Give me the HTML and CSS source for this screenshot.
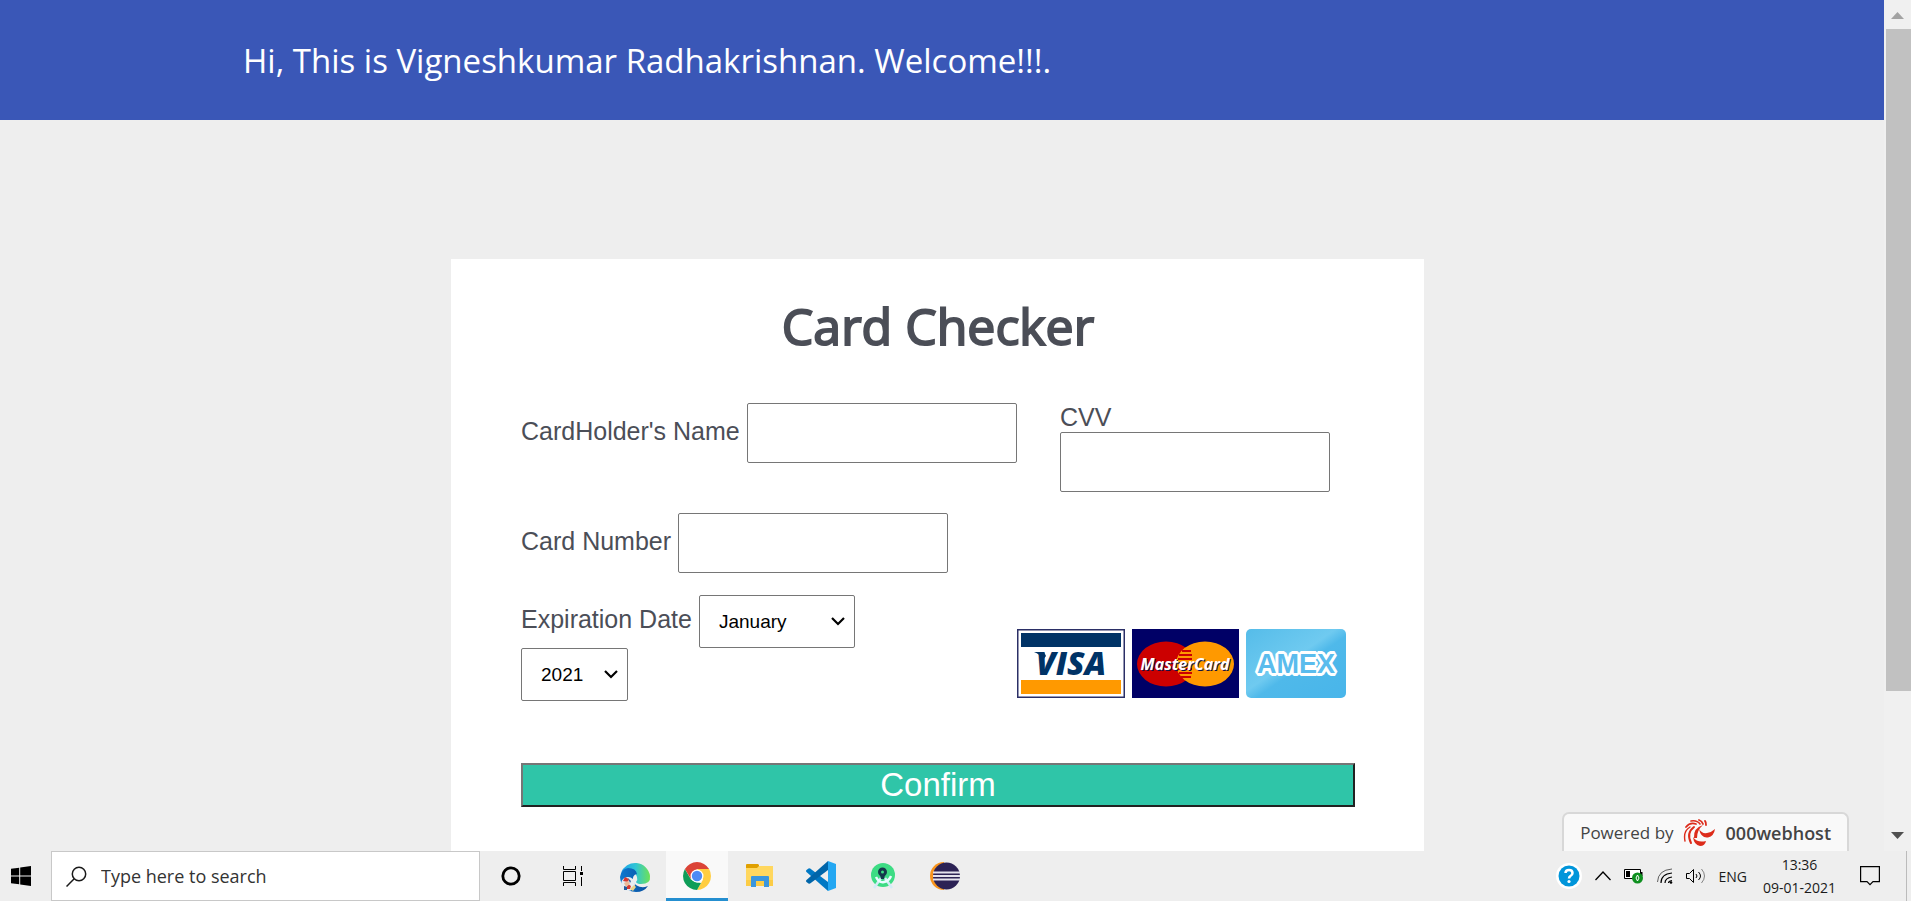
FILE: index.html
```html
<!DOCTYPE html>
<html lang="en">
<head>
<meta charset="utf-8">
<title>Card Checker</title>
<link rel="stylesheet" href="styles.css">
</head>
<body>
<div class="viewport">
  <div class="page">
    <header class="banner"><p class="banner-text">Hi, This is Vigneshkumar Radhakrishnan. Welcome!!!.</p></header>
    <main class="content">
      <form class="card">
        <h1 class="card-title">Card Checker</h1>
        <div class="row">
          <div class="field">
            <label for="owner">CardHolder's Name</label>
            <input id="owner" class="text-input" type="text">
          </div>
          <div class="field-stacked">
            <label for="cvv">CVV</label>
            <input id="cvv" class="text-input" type="text">
          </div>
        </div>
        <div class="field number-field">
          <label for="number">Card Number</label>
          <input id="number" class="text-input" type="text">
        </div>
        <div class="row">
          <div class="expiry">
            <div class="field">
              <label for="month">Expiration Date</label>
              <select id="month" class="select month"><option>January</option><option>February</option><option>March</option></select>
            </div>
            <select class="select year" aria-label="Expiration year"><option>2021</option><option>2022</option><option>2023</option></select>
          </div>
          <div class="brands">
            <svg width="108" height="69" viewBox="0 0 108 69" role="img" aria-label="Visa">
              <rect x=".75" y=".75" width="106.500" height="67.500" fill="#fff" stroke="#2b2f66" stroke-width="1.500"/>
              <rect x="4" y="4" width="100" height="14" fill="#003366"/><rect x="4" y="51" width="100" height="14" fill="#ff9900"/>
              <text x="54" y="46" text-anchor="middle" class="visa">VISA</text>
              <path d="M17 23h10l2 4-3 4q-3-6-9-8z" fill="#003366"/>
            </svg>
            <svg width="107" height="69" viewBox="0 0 107 69" role="img" aria-label="MasterCard">
              <rect width="107" height="69" fill="#000066"/>
              <ellipse cx="34" cy="35" rx="29" ry="22.500" fill="#cc0000"/><ellipse cx="73" cy="35" rx="29" ry="22.500" fill="#ff9900"/>
              <path d="M50 22h9M47 26h13M46 30h14M46 40h14M47 44h13M49 48h10" stroke="#cc0000" stroke-width="1.800"/>
              <text x="54" y="42" text-anchor="middle" class="mastercard shade">MasterCard</text>
              <text x="53" y="41" text-anchor="middle" class="mastercard">MasterCard</text>
            </svg>
            <svg width="100" height="69" viewBox="0 0 100 69" role="img" aria-label="Amex">
              <defs><linearGradient id="amex" x1="0" y1="0" x2="1" y2="1"><stop offset="0" stop-color="#55bce9"/><stop offset=".45" stop-color="#6fcaf0"/><stop offset=".55" stop-color="#4fb9ea"/><stop offset="1" stop-color="#48b5ea"/></linearGradient></defs>
              <rect width="100" height="69" rx="5" fill="url(#amex)"/>
              <text x="50" y="44" text-anchor="middle" class="amex">AMEX</text>
            </svg>
          </div>
        </div>
        <button class="confirm" type="submit">Confirm</button>
      </form>
    </main>
    <a class="host-badge" href="#">
      <span>Powered by</span>
      <svg width="34" height="28" viewBox="0 0 34 28" fill="#dd2c1b" aria-hidden="true">
        <path d="M16 10q3 5 8 4 5-1 8-4-1 7-7 8.500-7 1-9-8.500z"/>
        <path d="M10 18q4 6 13 4-1 5-6 5-6-1-7-9z"/>
        <path d="M11 19q-1-10 9-13-6 5-6 13z"/>
        <g fill="none" stroke="#dd2c1b" stroke-linecap="round"><path d="M8 24Q3 14 11 8" stroke-width="2"/><path d="M2 22Q0 12 7 8" stroke-width="1.400"/><path d="M3 8q4-5 10-3" stroke-width="1.800"/><path d="M8 2q6-1 9 3" stroke-width="1.600"/><path d="M16 1q3 1 4 4M22 2q1 1 1 4" stroke-width="1.800"/></g>
      </svg>
      <span class="host-name">000webhost</span>
    </a>
  </div>
  <div class="scrollbar" aria-hidden="true">
    <svg class="arrow" viewBox="0 0 13 7" fill="#a3a3a3"><path d="M0 7L6.500 0 13 7z"/></svg>
    <div class="thumb"></div>
    <svg class="arrow" viewBox="0 0 13 7" fill="#505050"><path d="M0 0h13L6.500 7z"/></svg>
  </div>
</div>
<footer class="taskbar">
  <button class="start" aria-label="Start"><svg width="20" height="20" viewBox="0 0 20 20"><path d="M0 2.800L8.200 1.700V9.400H0zM9.200 1.500L20 0v9.400H9.200zM0 10.400h8.200v7.900L0 17.200zM9.200 10.400H20V20L9.200 18.500z"/></svg></button>
  <label class="search">
    <svg width="21" height="21" viewBox="0 0 21 21" fill="none" stroke="#1a1a1a" stroke-width="1.500" aria-hidden="true"><circle cx="13" cy="8" r="6.700"/><path d="M8.200 12.800L.5 20.500"/></svg>
    <input type="text" placeholder="Type here to search" aria-label="Type here to search">
  </label>
  <nav class="apps">
    <button class="app" aria-label="Cortana"><svg width="20" height="20" viewBox="0 0 20 20"><circle cx="10" cy="10" r="8.200" fill="none" stroke="#000" stroke-width="2.800"/></svg></button>
    <button class="app" aria-label="Task View"><svg width="20" height="20" viewBox="0 0 20 20" fill="none" stroke="#000"><path d="M.5 0v3.500h12V0M.5 5.500h12v9H.5zM.5 20v-3.500h12V20M18.500 0v5M18.500 11v9"/><path d="M17 6h3v3h-3z" fill="#000" stroke="none"/></svg></button>
    <button class="app" aria-label="Edge"><svg width="31" height="31" viewBox="0 0 31 31">
      <defs>
        <linearGradient id="edge-top" x1="0" x2="1"><stop stop-color="#1ca0e8"/><stop offset=".5" stop-color="#30c5d5"/><stop offset="1" stop-color="#6ee255"/></linearGradient>
        <linearGradient id="edge-side" x1="0" x2="1"><stop stop-color="#0d78d0"/><stop offset="1" stop-color="#0a4f9e"/></linearGradient>
      </defs>
      <path d="M1 12A15 15 0 0130 15q1 8-9 8-4 0-5-2 2-2 1-5-3-8-9-8-5 1-7 4z" fill="url(#edge-top)"/>
      <path d="M0 16Q1 8 8 7q8 0 9 6-5 1-4 7 3 7 12 6l3-1q-4 6-12 6Q1 30 0 16z" fill="url(#edge-side)"/>
      <circle cx="8" cy="23" r="7" fill="#e7edf1"/><path d="M3 20l2-4 4 2-1 3zM8 23l3 2-1 3H6z" fill="#d53831"/><path d="M4 22l4-2 2 3-4 3z" fill="#ebbb99"/><path d="M4 25l3 1v3H4zM8 17l3 3-1 2z" fill="#275b99"/><path d="M10 28l4-4 2 2-3 4z" fill="#ead38a"/>
    </svg></button>
    <button class="app active" aria-label="Chrome"><svg width="28" height="28" viewBox="0 0 28 28">
      <path d="M14 7h12.100A14 14 0 0114 28l6.100-10.500z" fill="#ffcd40"/><path d="M1.900 7L8 17.500 14 20.500 18 21 14 28A14 14 0 011.900 7z" fill="#0f9d58"/><path d="M1.900 7A14 14 0 0126.100 7H14L8 17z" fill="#db4437"/>
      <circle cx="14" cy="14" r="6.500" fill="#fff"/><circle cx="14" cy="14" r="5.200" fill="#4c8bf5"/>
    </svg></button>
    <button class="app" aria-label="File Explorer"><svg width="27" height="24" viewBox="0 0 27 24"><path d="M0 1q0-1 1-1h11l1 1v4H0z" fill="#e0a000"/><path d="M0 4h11l2-2h14v20H0z" fill="#ffd75e"/><path d="M0 16h27v6H0z" fill="#fccc45"/><path d="M5 23V13q0-1 1-1h16q1 0 1 1v10h-5v-6h-8v6z" fill="#3a96dd"/></svg></button>
    <button class="app" aria-label="Visual Studio Code"><svg width="30" height="30" viewBox="0 0 30 30"><path d="M.5 11q-1-1 0-2l2-1.500q1-.5 2 .2L22 21v9z" fill="#0078c4"/><path d="M.5 19q-1 1 0 2l2 1.500q1 .5 2-.2L22 9V0z" fill="#0065a9"/><path d="M22 0l8 3v24l-8 3z" fill="#24a7f2"/></svg></button>
    <button class="app" aria-label="Android Studio"><svg width="26" height="28" viewBox="0 0 26 28"><circle cx="13" cy="13" r="12" fill="#3ddc84"/><path d="M11 16L4 26M15 16l7 10" stroke="#d3ecf7" stroke-width="2.500"/><path d="M6 15q3 6 8 5 5-1 7-6" fill="none" stroke="#e9fbff" stroke-width="2.500"/><circle cx="12.500" cy="10" r="3" fill="none" stroke="#14394b" stroke-width="3"/><path d="M10 13h5l-1 4h-3z" fill="#14394b"/></svg></button>
    <button class="app" aria-label="Eclipse"><svg width="30" height="28" viewBox="0 0 30 28"><path d="M14 0A14 14 0 0014 28V0z" fill="#f7941e"/><circle cx="16.500" cy="14" r="13.500" fill="#2c2255"/><path d="M3 10.500h27M3 14h27M3 17.500h27" stroke="#e4e2ee" stroke-width="2"/></svg></button>
  </nav>
  <div class="tray">
    <svg width="26" height="26" viewBox="0 0 26 26" aria-hidden="true"><circle cx="13" cy="13" r="13" fill="#fff"/><circle cx="13" cy="13" r="10.500" fill="#0095da"/><path d="M9.500 10q0-3 3.500-3t3.500 3q0 2-2 3-1.500 1-1.500 2.500" fill="none" stroke="#fff" stroke-width="2.500"/><circle cx="13" cy="18.500" r="1.600" fill="#fff"/></svg>
    <svg width="16" height="10" viewBox="0 0 16 10" fill="none" stroke="#000" stroke-width="1.300" aria-hidden="true"><path d="M.5 9L8 1l7.500 8"/></svg>
    <svg width="20" height="16" viewBox="0 0 20 16" aria-hidden="true"><path d="M.5 1.500h16v9H.5z" fill="#fff" stroke="#000"/><path d="M2 3h4v6H2z"/><path d="M17 4h1.500v4H17z"/><circle cx="13.500" cy="10" r="5.500" fill="#0f9020"/><path d="M13.500 7q3 3 0 6-3-3 0-6z" fill="none" stroke="#fff"/></svg>
    <svg width="16" height="16" viewBox="0 0 16 16" fill="none" stroke="#000" aria-hidden="true"><path d="M.5 14Q1 2 15 1" opacity=".6"/><path d="M4 15Q4 6 15 5M8 15q0-5 7-6M11.500 15q0-2 3.500-2.500" stroke-width="1.200"/><circle cx="14" cy="14.500" r="1.300" fill="#000" stroke="none"/></svg>
    <svg width="20" height="18" viewBox="0 0 20 18" fill="none" stroke="#000" aria-hidden="true"><path d="M.5 6.500h3l4-4v13l-4-4h-3z"/><path d="M10 7q2 2 0 4M12.500 5q4 4 0 8"/><path d="M15.500 2q6 7 0 14" opacity=".45"/></svg>
    <span class="lang">ENG</span>
    <time class="clock" datetime="2021-01-09T13:36"><span>13:36</span><span>09-01-2021</span></time>
    <svg width="20" height="20" viewBox="0 0 20 20" fill="none" stroke="#000" stroke-width="1.200" aria-hidden="true"><path d="M.6.600h18.800v15H13l-3 3-3-3H.6z"/></svg>
  </div>
</footer>
</body>
</html>
```
FILE: styles.css
```css
* { box-sizing: border-box; }
body {
  margin: 0;
  height: 100vh;
  display: flex;
  flex-direction: column;
  overflow: hidden;
  background: #eee;
  font-family: "Open Sans", "Noto Sans", sans-serif;
}
button { font: inherit; }
.viewport { flex: 1; min-height: 0; display: flex; }
.page { position: relative; flex: 1; min-width: 0; overflow: hidden; }

.banner { background: #3a57b7; color: #fff; padding: 37px 16px 35px 243px; }
.banner-text { margin: 0; font-size: 33px; line-height: 48px; }

.content { padding: 139px 9px 0 0; }
.card {
  max-width: 973px;
  margin: 0 auto;
  padding: 35px 69px 80px 70px;
  background: #fff;
  color: #4b4e57;
  font-family: "Liberation Sans", Arial, sans-serif;
  font-size: 25px;
  line-height: 29px;
}
.card-title {
  margin: 0 0 45px;
  font-family: "Open Sans", sans-serif;
  font-size: 50px;
  line-height: 64px;
  font-weight: 400;
  -webkit-text-stroke: 2px #4b4e57;
  text-align: center;
}
.row { display: flex; align-items: flex-start; justify-content: space-between; }
.field { display: flex; align-items: center; gap: 7px; }
.field label { padding-bottom: 4px; }
.field-stacked { display: flex; flex-direction: column; margin-right: 25px; }
.number-field { margin: 21px 0 22px; }
.text-input {
  width: 270px;
  height: 60px;
  padding: 0 18px;
  border: 1px solid #767676;
  border-radius: 2px;
  background: #fff;
  font: 19px "Liberation Sans", Arial, sans-serif;
}
.select {
  appearance: none;
  height: 53px;
  padding: 0 19px;
  border: 1px solid #767676;
  border-radius: 2px;
  color: #000;
  background: #fff url("data:image/svg+xml,%3Csvg xmlns='http://www.w3.org/2000/svg' width='14' height='9' fill='none' stroke='black' stroke-width='2.200'%3E%3Cpath d='M1 1l6 6 6-6'/%3E%3C/svg%3E") no-repeat right 9px center;
  font: 19px "Liberation Sans", Arial, sans-serif;
}
.month { width: 156px; }
.year { width: 107px; }
.expiry { display: flex; flex-direction: column; align-items: flex-start; }
.brands { display: flex; gap: 7px; margin: 34px 9px 0 0; }
.visa { font: italic 800 32px "Open Sans", sans-serif; fill: #003366; }
.mastercard { font: italic 700 16px "Open Sans", sans-serif; fill: #fff; }
.shade { fill: #111144; }
.amex { font: 700 27px "Liberation Sans", sans-serif; fill: #5abced; stroke: #fff; stroke-width: 6px; stroke-linejoin: bevel; paint-order: stroke; }
.confirm {
  display: block;
  width: 100%;
  height: 44px;
  margin-top: 62px;
  padding: 0;
  border: 2px solid;
  border-color: #767676 #212121 #212121 #767676;
  background: #2fc5a8;
  color: #fff;
  font: 33px/38px "Liberation Sans", Arial, sans-serif;
}

.host-badge {
  position: absolute;
  right: 35px;
  bottom: 0;
  display: flex;
  align-items: center;
  gap: 9px;
  height: 39px;
  padding: 0 16px;
  border: 2px solid #d8d8d8;
  border-bottom: 0;
  border-radius: 7px 7px 0 0;
  background: #f9f9f9;
  color: #444;
  font-size: 17px;
  text-decoration: none;
}
.host-name { font-size: 18px; font-weight: 600; }

.scrollbar {
  width: 27px;
  display: flex;
  flex-direction: column;
  align-items: center;
  padding: 12px 0;
  background: #f0f0f0;
}
.arrow { width: 13px; height: 7px; }
.thumb { align-self: stretch; margin: 10px 0 auto 2px; height: 80%; background: #c1c1c1; }

.taskbar { display: flex; height: 50px; background: #eee; color: #1a1a1a; }
.start, .app {
  display: flex;
  align-items: center;
  justify-content: center;
  border: 0;
  padding: 0;
  background: none;
}
.start { width: 51px; padding-right: 9px; }
.search {
  display: flex;
  align-items: center;
  gap: 14px;
  width: 429px;
  padding: 0 14px;
  border: 1px solid #c8c8c8;
  background: #fff;
}
.search input { flex: 1; min-width: 0; padding: 0; border: 0; outline: 0; font: 18px "Open Sans", sans-serif; }
.search input::placeholder { color: #333; opacity: 1; }
.apps { display: flex; }
.app { width: 62px; }
.active { background: #f9f9f9; border: solid #258fd0; border-width: 0 0 3px; padding-top: 3px; }
.tray {
  display: flex;
  align-items: center;
  gap: 13px;
  margin: 0 4px 0 auto;
  padding-right: 26px;
  border-right: 1px solid #bbb;
  font-size: 14px;
}
.lang { margin-right: 2px; }
.clock { display: flex; flex-direction: column; align-items: center; min-width: 75px; line-height: 23px; margin-right: 10px; }
```
